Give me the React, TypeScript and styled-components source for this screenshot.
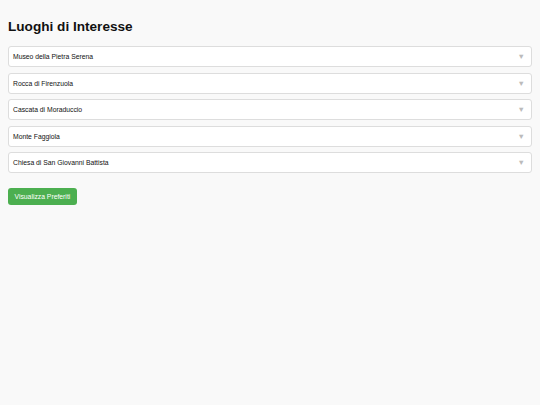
import React from 'react';
import styled, { createGlobalStyle } from 'styled-components';

const GlobalStyle = createGlobalStyle`
  html, body {
    margin: 0;
    padding: 0;
    background: #f9f9f9;
    font-family: "Liberation Sans", Arial, sans-serif;
  }
`;

const Page = styled.div`
  padding: 8px;
`;

const Title = styled.h2`
  margin: 10px 0 10px;
  font-size: 13.6px;
  line-height: 18px;
  font-weight: bold;
  color: #111;
`;

const List = styled.div`
  display: flex;
  flex-direction: column;
  gap: 5.5px;
`;

const Item = styled.div`
  box-sizing: border-box;
  display: flex;
  align-items: center;
  justify-content: space-between;
  height: 21px;
  padding: 0 6px 0 4px;
  background: #fff;
  border: 1px solid #ddd;
  border-radius: 3px;
  font-size: 6.8px;
  color: #111;
`;

const Arrow = styled.span`
  font-size: 7.5px;
  color: #bbb;
`;

const Button = styled.button`
  margin-top: 15px;
  height: 17px;
  padding: 0 6.5px;
  background: #4caf50;
  color: #fff;
  border: none;
  border-radius: 3px;
  font-family: "Liberation Sans", Arial, sans-serif;
  font-size: 6.8px;
`;

const places = [
  'Museo della Pietra Serena',
  'Rocca di Firenzuola',
  'Cascata di Moraduccio',
  'Monte Faggiola',
  'Chiesa di San Giovanni Battista',
];

export default function App() {
  return (
    <>
      <GlobalStyle />
      <Page>
        <Title>Luoghi di Interesse</Title>
        <List>
          {places.map((p) => (
            <Item key={p}>
              <span>{p}</span>
              <Arrow>▼</Arrow>
            </Item>
          ))}
        </List>
        <Button>Visualizza Preferiti</Button>
      </Page>
    </>
  );
}
